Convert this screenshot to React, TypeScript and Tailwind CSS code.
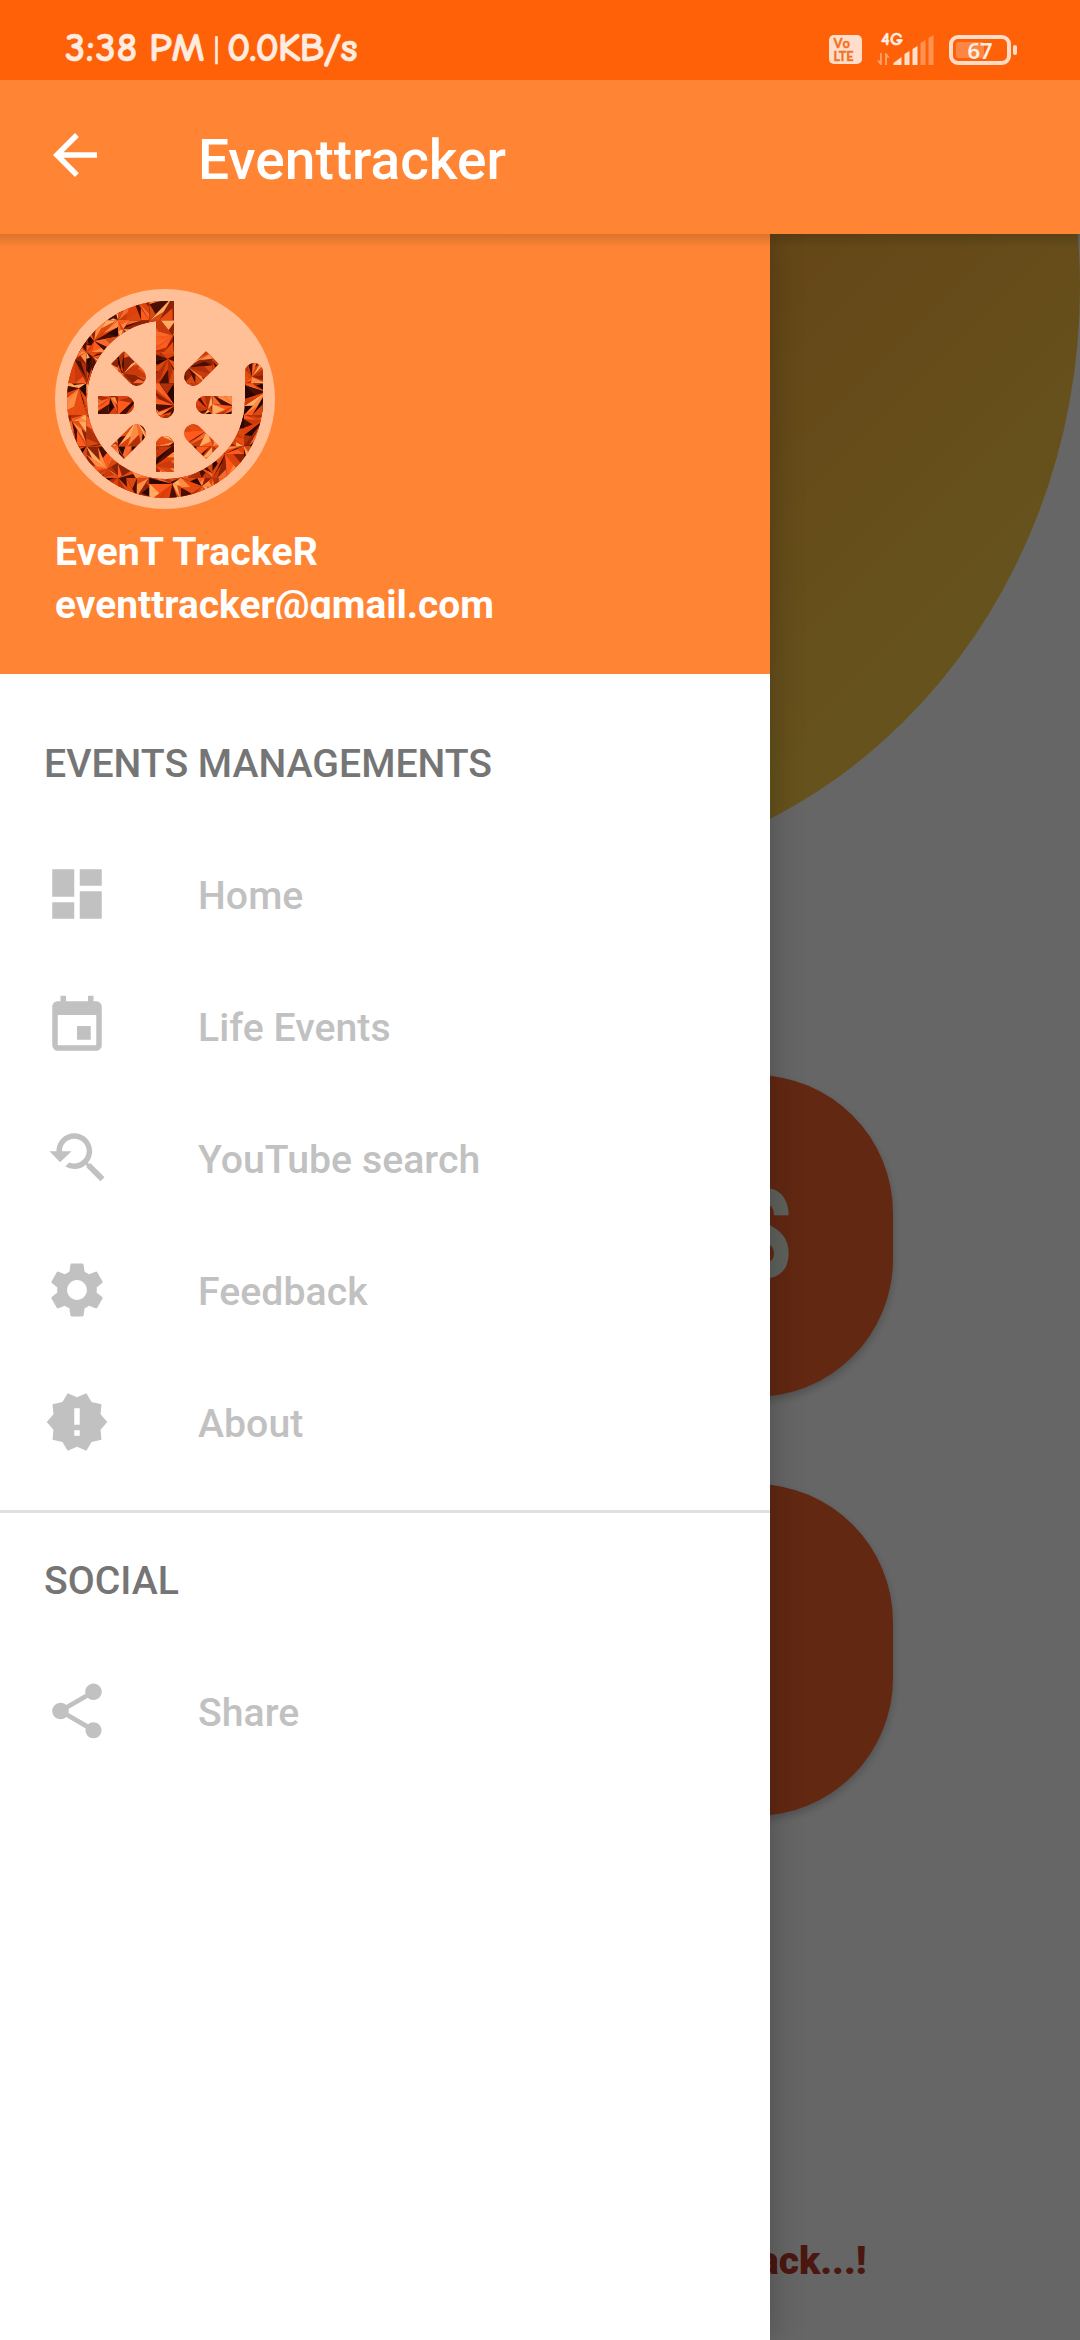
import React from "react";
import type { IconType } from "react-icons";
import {
  MdArrowBack,
  MdDashboard,
  MdEvent,
  MdYoutubeSearchedFor,
  MdSettings,
  MdNewReleases,
  MdShare,
} from "react-icons/md";

/* ---------- Status bar ---------- */

function SignalIcon() {
  return (
    <svg className="ml-[15px] h-[36px] w-[58px] overflow-visible" viewBox="0 0 58 36">
      <g fill="#ffe0cc">
        <path d="M16.500 36v-2l8-6V36z" />
        <path d="M27.500 36V25l5-3v14z" />
        <path d="M35.500 36V20l5-3v19z" />
      </g>
      <g fill="#ff9250">
        <path d="M43.500 36V14l5-3v25z" />
        <path d="M51.500 36V9l5-3v30z" />
      </g>
      <g fill="#ffa067">
        <path d="M3 24h1.800v12H3.500L0 31.500h3z" />
        <path d="M8 36V24h1.200l3.600 4.500H10V36z" />
      </g>
      <text
        x="4"
        y="15.500"
        fill="#fff0e6"
        stroke="#fff0e6"
        strokeWidth="0.500"
        fontSize="18.500"
        fontWeight="700"
        textLength="22"
        fontFamily="'Comic Neue', Lato, sans-serif"
      >
        4G
      </text>
    </svg>
  );
}

function StatusBar() {
  return (
    <div className="flex h-[80px] items-start bg-[#ff6108] pl-[65px] pr-[63px] text-[#ffece0]">
      <div className="mt-[23px] flex h-[50px] items-center whitespace-nowrap font-['Comic_Neue','Lato',sans-serif] text-[41px] font-bold leading-[50px] [-webkit-text-stroke:0.6px_#ffece0]">
        <span className="w-[148px] tracking-[0.9px] [word-spacing:-5px]">3:38 PM</span>
        <span className="w-[14px] font-['Lato',sans-serif] text-[28px] font-normal">|</span>
        <span className="tracking-[-1.2px]">0.0KB/s</span>
      </div>
      <div className="ml-auto mt-[29px] flex items-center">
        <div className="mt-[5px] flex h-[29px] w-[33px] flex-col items-center justify-center rounded-[5px] bg-[#ffdfcb] font-['Lato',sans-serif] text-[13px] font-bold leading-[13px] text-[#f5701f] [-webkit-text-stroke:0.4px_#f5701f]">
          <span className="w-[24px] tracking-[1px]">Vo</span>
          <span className="w-[24px] text-[12.5px]">LTE</span>
        </div>
        <SignalIcon />
        <div className="mt-[5px] ml-[14px] flex h-[30px] w-[62px] items-center rounded-[9px] border-[4px] border-[#ffdcc8] p-[3px]">
          <div className="flex h-[16px] w-[28px] items-center rounded-[2px] bg-[#ff8640]">
            <span className="w-[48px] shrink-0 text-center font-['Noto_Sans',sans-serif] text-[22px] font-semibold leading-[16px] text-[#fff0e6]">
              67
            </span>
          </div>
        </div>
        <div className="mt-[5px] ml-[2px] h-[10px] w-[4px] rounded-[2px] bg-[#ffdcc8]" />
      </div>
    </div>
  );
}

/* ---------- Drawer logo ---------- */

const EMBER = [
  "#4a0f04", "#e0400c", "#ff8a42", "#8c2208", "#ff5a1c", "#c93a0c",
  "#ffac60", "#2a0702", "#e84c10", "#b0300a", "#f56a2c", "#d8480f",
];

type Facet = { points: string; fill: string };

/* Crystal texture: cells of thin wedges fanning out of an off-centre hub. */
function buildFacets(): Facet[] {
  let seed = 41;
  const rnd = () => {
    seed = (seed * 16807) % 2147483647;
    return seed / 2147483647;
  };
  const out: Facet[] = [];
  const cell = 94.5;
  for (let gy = 0; gy < 7; gy++) {
    for (let gx = 0; gx < 7; gx++) {
      const x0 = 75 + gx * cell;
      const y0 = 57 + gy * cell;
      const hx = x0 + cell * (0.15 + 0.7 * rnd());
      const hy = y0 + cell * (0.15 + 0.7 * rnd());
      const rim: [number, number][] = [];
      for (let side = 0; side < 4; side++) {
        let t = 0;
        while (t < 1) {
          const a = t * cell;
          if (side === 0) rim.push([x0 + a, y0]);
          if (side === 1) rim.push([x0 + cell, y0 + a]);
          if (side === 2) rim.push([x0 + cell - a, y0 + cell]);
          if (side === 3) rim.push([x0, y0 + cell - a]);
          t += 0.2 + 0.35 * rnd();
        }
      }
      rim.forEach(([ax, ay], i) => {
        const [bx, by] = rim[(i + 1) % rim.length];
        const k = 0.35 + 0.4 * rnd();
        const mx = hx + (ax - hx) * k;
        const my = hy + (ay - hy) * k;
        const c1 = EMBER[Math.floor(rnd() * EMBER.length)];
        const c2 = EMBER[Math.floor(rnd() * EMBER.length)];
        out.push({ points: `${hx},${hy} ${ax},${ay} ${bx},${by}`, fill: c1 });
        out.push({ points: `${mx},${my} ${ax},${ay} ${bx},${by}`, fill: c2 });
      });
    }
  }
  return out;
}

const FACETS = buildFacets();

/* One segment with a flat outer end and a rounded end towards the centre. */
const SEGMENT = "M-27 201V120a27 27 0 0 1 54 0v81z";

function Logo() {
  return (
    <svg className="block size-[220px]" viewBox="75 57 660 660">
      <defs>
        <clipPath id="citrus">
          <path d="M432 93V417a27 27 0 0 1-54 0V153A236 236 0 0 0 171 392A235 235 0 0 0 405 627A238 238 0 0 0 645 390V306a27 27 0 0 1 54 0V390A294 294 0 0 1 111 390A295 295 0 0 1 405 93z" />
          <path d={SEGMENT} transform="translate(405 405) rotate(0)" />
          <path d={SEGMENT} transform="translate(405 405) rotate(45)" />
          <path d={SEGMENT} transform="translate(405 405) rotate(90)" />
          <path d={SEGMENT} transform="translate(405 405) rotate(135)" />
          <path d={SEGMENT} transform="translate(405 405) rotate(225)" />
          <path d={SEGMENT} transform="translate(405 405) rotate(270)" />
          <path d={SEGMENT} transform="translate(405 405) rotate(315)" />
        </clipPath>
      </defs>
      <circle cx="405" cy="387" r="330" fill="#ffbf97" />
      <g clipPath="url(#citrus)">
        <rect x="75" y="57" width="660" height="660" fill="#c93208" />
        {FACETS.map((f, i) => (
          <polygon key={i} points={f.points} fill={f.fill} />
        ))}
      </g>
    </svg>
  );
}

/* ---------- Drawer ---------- */

type Item = { label: string; icon: IconType };

const EVENTS: Item[] = [
  { label: "Home", icon: MdDashboard },
  { label: "Life Events", icon: MdEvent },
  { label: "YouTube search", icon: MdYoutubeSearchedFor },
  { label: "Feedback", icon: MdSettings },
  { label: "About", icon: MdNewReleases },
];

const SOCIAL: Item[] = [{ label: "Share", icon: MdShare }];

function Group({ title, items }: { title: string; items: Item[] }) {
  return (
    <section>
      <h2 className="flex h-[132px] items-center pl-[44px] pt-[4px] font-medium text-[#757575]">{title}</h2>
      <ul>
        {items.map(({ label, icon: Icon }) => (
          <li key={label} className="flex h-[132px] items-center pl-[44px] font-medium text-[#c1c1c1]">
            <Icon className="mr-[88px] size-[66px]" />
            <span className="mt-[4px] tracking-[0.05px]">{label}</span>
          </li>
        ))}
      </ul>
    </section>
  );
}

function Drawer() {
  return (
    <aside className="absolute inset-y-0 left-0 w-[770px] bg-white text-[39.2px] leading-[52px] shadow-[0_0_32px_rgba(0,0,0,0.25)]">
      <header className="h-[440px] bg-[#ff8534] px-[55px] pt-[55px] font-bold text-white">
        <Logo />
        <div className="mt-[17px] h-[52px] tracking-[0.15px]">EvenT TrackeR</div>
        <div className="mt-[1px] h-[40px] overflow-hidden text-[38.9px]">eventtracker@gmail.com</div>
      </header>
      <nav className="pt-[22px]">
        <Group title="EVENTS MANAGEMENTS" items={EVENTS} />
        <hr className="mt-[22px] h-[3px] border-0 bg-[#e0e0e0]" />
        <Group title="SOCIAL" items={SOCIAL} />
      </nav>
    </aside>
  );
}

/* ---------- Screen behind the drawer ---------- */

function HomeScreen() {
  return (
    <div className="relative flex h-full flex-col items-center overflow-hidden bg-white">
      <div className="-mt-[535px] h-[1176px] w-[1080px] shrink-0 rounded-[50%] bg-[linear-gradient(135deg,#ff9a2c_20%,#ffaa38_52%,#ffcc48_82%)]" />
      <div className="mt-[200px] flex h-[322px] w-[706px] shrink-0 items-center justify-end rounded-[138px] bg-[#f5642d] pr-[101px] shadow-[0_4px_9px_rgba(0,0,0,0.22)]">
        <span className="origin-right scale-x-[0.700] font-['Roboto'] text-[122px] font-black leading-none text-[#eef5e6]">
          EVENTS
        </span>
      </div>
      <div className="mt-[87px] h-[332px] w-[706px] shrink-0 rounded-[138px] bg-[#f5642d] shadow-[0_4px_9px_rgba(0,0,0,0.22)]" />
      <p className="mt-[419px] w-[653px] text-right text-[39px] font-black leading-[52px] text-[#bc3a2b]">
        Feedback...!
      </p>
    </div>
  );
}

export default function App() {
  return (
    <div className="flex h-[2340px] w-[1080px] flex-col overflow-hidden font-['Roboto',sans-serif]">
      <StatusBar />
      <div className="flex h-[154px] items-center bg-[#ff8534] pl-[42px] text-white">
        <MdArrowBack className="-mt-[4px] size-[66px]" />
        <h1 className="ml-[90px] mt-[6px] text-[55px] font-medium leading-[66px]">Eventtracker</h1>
      </div>
      <main className="relative h-[2106px] overflow-hidden">
        <HomeScreen />
        <div className="absolute inset-0 bg-black/60" />
        <Drawer />
        <div className="absolute inset-x-0 top-0 h-[14px] bg-linear-to-b from-black/14 to-transparent" />
      </main>
    </div>
  );
}
